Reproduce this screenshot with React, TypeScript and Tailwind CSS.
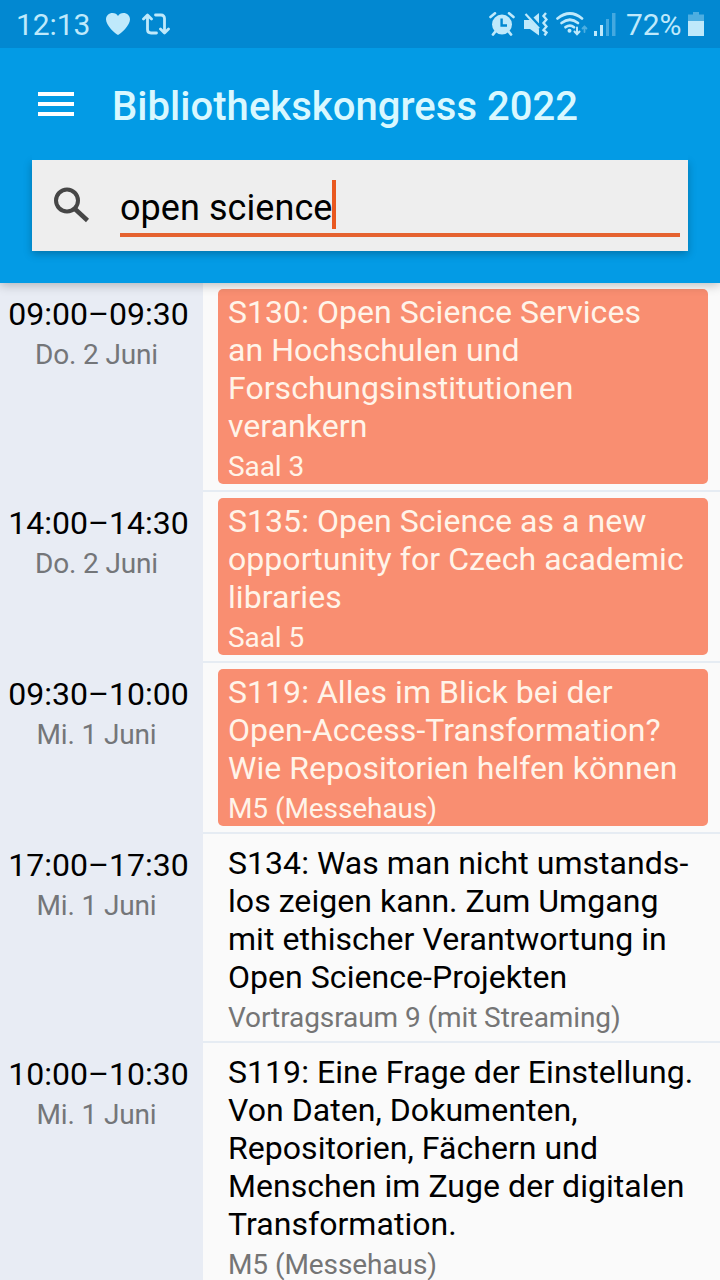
import React from "react";

type Session = {
  time: string;
  day: string;
  lines: string[];
  room: string;
  marked: boolean;
};

const sessions: Session[] = [
  { time: "09:00–09:30", day: "Do. 2 Juni", lines: ["S130: Open Science Services", "an Hochschulen und", "Forschungsinstitutionen", "verankern"], room: "Saal 3", marked: true },
  { time: "14:00–14:30", day: "Do. 2 Juni", lines: ["S135: Open Science as a new", "opportunity for Czech academic", "libraries"], room: "Saal 5", marked: true },
  { time: "09:30–10:00", day: "Mi. 1 Juni", lines: ["S119: Alles im Blick bei der", "Open-Access-Transformation?", "Wie Repositorien helfen können"], room: "M5 (Messehaus)", marked: true },
  { time: "17:00–17:30", day: "Mi. 1 Juni", lines: ["S134: Was man nicht umstands-", "los zeigen kann. Zum Umgang", "mit ethischer Verantwortung in", "Open Science-Projekten"], room: "Vortragsraum 9 (mit Streaming)", marked: false },
  { time: "10:00–10:30", day: "Mi. 1 Juni", lines: ["S119: Eine Frage der Einstellung.", "Von Daten, Dokumenten,", "Repositorien, Fächern und", "Menschen im Zuge der digitalen", "Transformation."], room: "M5 (Messehaus)", marked: false },
];

function HeartIcon() {
  return (
    <svg className="ml-[15px] h-6 w-6" viewBox="0 0 24 24" fill="currentColor">
      <path d="M12 23C9.500 22 0 13.500 0 7.500C0 3.500 3 1 6.500 1C9 1 11 2.200 12 4C13 2.200 15 1 17.500 1C21 1 24 3.500 24 7.500C24 13.500 14.500 22 12 23z" />
    </svg>
  );
}

function RepostIcon() {
  return (
    <svg className="ml-3 h-6 w-7" viewBox="0 0 28 24" fill="none" stroke="currentColor" strokeWidth="2.800" strokeLinecap="round" strokeLinejoin="round">
      <path d="M1.500 7L5.500 3L9.500 7M5.500 4V17.500Q5.500 21 9 21H14.500" />
      <path d="M18.500 17L22.500 21L26.500 17M22.500 20V6.500Q22.500 3 19 3H13.500" />
    </svg>
  );
}

function AlarmIcon() {
  return (
    <svg className="h-6 w-[26px]" viewBox="0 0 26 24" fill="none" stroke="currentColor">
      <circle cx="13" cy="12.500" r="10" fill="currentColor" stroke="none" />
      <path d="M1.500 5L6 1.300M24.500 5L20 1.300" strokeWidth="2.600" strokeLinecap="round" />
      <path d="M6 20L4 22.500M20 20L22 22.500" strokeWidth="2.800" strokeLinecap="round" />
      <path d="M12.600 6.500V13.500H18" stroke="#0288d1" strokeWidth="2.400" />
    </svg>
  );
}

function MuteIcon() {
  return (
    <svg className="ml-[9px] h-6 w-6" viewBox="0 0 24 24" fill="none" stroke="currentColor">
      <path d="M0 8H6L15 17.500V23.500L6 17H0z" fill="currentColor" stroke="none" />
      <path d="M9.500 5.500L15 1V11.500z" fill="currentColor" stroke="none" />
      <path d="M1.500 2L15 16.500" strokeWidth="2.200" />
      <path d="M22 1L19.500 4L22.500 7.500L19.500 11L22.500 14.500L19.500 18L22.500 20.500L20.500 23.500" strokeWidth="2.400" />
    </svg>
  );
}

function WifiIcon() {
  return (
    <svg className="ml-2 h-6 w-8" viewBox="0 0 32 24" fill="none" stroke="currentColor" strokeLinecap="round">
      <path d="M1.500 6.500Q14 -3.500 26 6.500" strokeWidth="2.700" />
      <path d="M5.500 11Q14 4.500 22 11" strokeWidth="2.700" />
      <path d="M9.500 15.200Q14 12 18 15.200" strokeWidth="2.700" />
      <circle cx="13.500" cy="18.700" r="2" fill="currentColor" stroke="none" />
      <path d="M21 15.500V22M18.500 19.500L21 22.300L23.500 19.500" strokeWidth="2" />
      <path d="M28.500 20V14.500M26.500 16.500L28.500 14.500L30.500 16.500" strokeWidth="1.800" opacity="0.4" />
    </svg>
  );
}

function SignalIcon() {
  return (
    <svg className="ml-1.5 h-6 w-[22px]" viewBox="0 0 22 24" fill="currentColor">
      <rect x="0" y="19" width="3" height="5" />
      <rect x="6" y="13" width="3" height="11" />
      <rect x="12" y="7" width="3" height="17" opacity="0.35" />
      <rect x="18" y="1" width="3.500" height="23" opacity="0.35" />
    </svg>
  );
}

function BatteryIcon() {
  return (
    <svg className="ml-[6px] h-6 w-4" viewBox="0 0 16 24" fill="currentColor">
      <path d="M5 0H11V2.500H16V9H0V2.500H5z" opacity="0.4" />
      <rect x="0" y="9" width="16" height="15" />
    </svg>
  );
}

function StatusBar() {
  return (
    <div className="relative z-20 flex h-12 items-center bg-[#0288d1] pr-4 pl-4 text-[#bfe9fb]">
      <span className="w-[75px] pt-0.5 text-[30px] leading-[46px] tracking-[-0.1px] whitespace-nowrap">12:13</span>
      <HeartIcon />
      <RepostIcon />
      <div className="ml-auto flex items-center">
        <AlarmIcon />
        <MuteIcon />
        <WifiIcon />
        <SignalIcon />
        <span className="ml-[10px] w-14 pt-0.5 text-[30px] leading-[46px] tracking-[-0.1px] whitespace-nowrap">72%</span>
        <BatteryIcon />
      </div>
    </div>
  );
}

function Header() {
  return (
    <header className="relative z-10 h-[235px] bg-[#039be5] px-8 shadow-[0_2px_10px_rgba(0,0,0,0.25)]">
      <div className="relative z-10 flex h-28 items-center bg-[#039be5]">
        <div className="ml-1.5 flex w-9 flex-col gap-1.5">
          <span className="h-1 bg-white" />
          <span className="h-1 bg-white" />
          <span className="h-1 bg-white" />
        </div>
        <h1 className="ml-[38px] pt-1.5 text-[40px] font-medium tracking-[0.04px] text-[#d9f8ff]">Bibliothekskongress 2022</h1>
      </div>
      <div className="flex h-[91px] bg-[#eeeeee] pr-2 shadow-[0_3px_8px_rgba(0,0,0,0.25)]">
        <svg className="mt-[26px] ml-[21px] size-[38px]" viewBox="0 0 38 38" fill="none" stroke="#464646">
          <circle cx="14" cy="14.500" r="11" strokeWidth="4" />
          <path d="M22 23L34.500 34.500" strokeWidth="4.500" />
        </svg>
        <div className="mt-5 ml-[29px] flex h-[57px] flex-1 items-start border-b-4 border-[#e5622f] text-[36px] leading-[56px] text-black">
          <span className="tracking-[0.06px]">open science</span>
          <span className="h-[49px] w-1 bg-[#e9581f]" />
        </div>
      </div>
    </header>
  );
}

function SessionRow({ session }: { session: Session }) {
  const { time, day, lines, room, marked } = session;
  return (
    <div className="flex">
      <div className="w-[203px] bg-[#e8ecf4] pt-[11px] text-center">
        <div className="pr-1.5 text-[32px] leading-[40px] text-black">{time}</div>
        <div className="pt-px pr-[10px] text-[28px] leading-[39px] tracking-[-0.16px] text-[#747679]">{day}</div>
      </div>
      <div className="flex-1 border-b-2 border-[#e6ecf3] pt-1.5 pr-3 pb-1.5 pl-[15px]">
        <div className={marked ? "rounded-[5px] bg-[#f98e71] pt-1 pl-2.5 text-[#fff4e9]" : "pt-1 pl-2.5 text-black"}>
          {lines.map((line) => (
            <div key={line} className="text-[32px] leading-[38px] tracking-[0.05px] whitespace-nowrap">{line}</div>
          ))}
          <div className={marked ? "h-[39px] text-[28px] leading-[44px] tracking-[-0.08px]" : "h-[39px] text-[28px] leading-[44px] tracking-[-0.08px] text-[#757575]"}>{room}</div>
        </div>
      </div>
    </div>
  );
}

export default function App() {
  return (
    <div className="h-[1280px] w-[720px] overflow-hidden bg-[#fafafa] font-['Roboto',sans-serif]">
      <StatusBar />
      <Header />
      <main>
        {sessions.map((session, i) => (
          <SessionRow key={i} session={session} />
        ))}
      </main>
    </div>
  );
}
